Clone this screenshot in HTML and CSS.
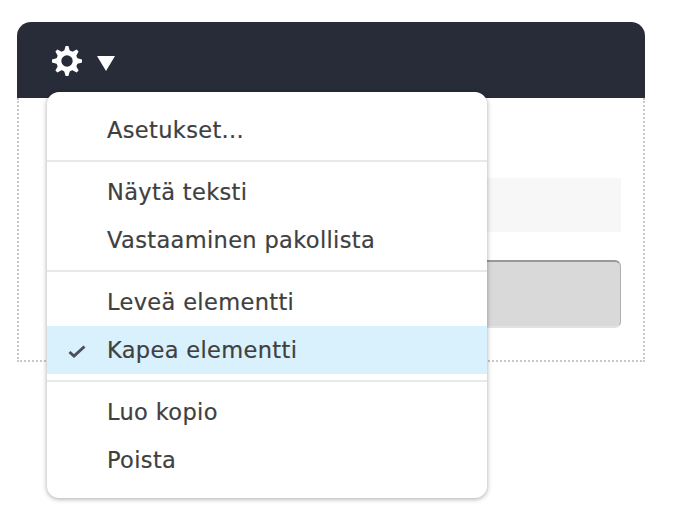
FILE: index.html
```html
<!DOCTYPE html>
<html lang="fi">
<head>
<meta charset="utf-8">
<title>Asetukset</title>
<link rel="stylesheet" href="styles.css">
</head>
<body>
<div class="card">
  <header class="card-head">
    <svg class="gear" viewBox="0 0 32 32" width="32" height="32" aria-hidden="true">
      <circle cx="16" cy="16" r="8.200" fill="none" stroke="#fff" stroke-width="5"/>
      <g fill="#fff">
        <path d="M13 6.500L14.600 1h2.800L19 6.500z"/>
        <path d="M13 6.500L14.600 1h2.800L19 6.500z" transform="rotate(45 16 16)"/>
        <path d="M13 6.500L14.600 1h2.800L19 6.500z" transform="rotate(90 16 16)"/>
        <path d="M13 6.500L14.600 1h2.800L19 6.500z" transform="rotate(135 16 16)"/>
        <path d="M13 6.500L14.600 1h2.800L19 6.500z" transform="rotate(180 16 16)"/>
        <path d="M13 6.500L14.600 1h2.800L19 6.500z" transform="rotate(225 16 16)"/>
        <path d="M13 6.500L14.600 1h2.800L19 6.500z" transform="rotate(270 16 16)"/>
        <path d="M13 6.500L14.600 1h2.800L19 6.500z" transform="rotate(315 16 16)"/>
      </g>
    </svg>
    <span class="caret"></span>
  </header>
  <div class="card-body">
    <div class="field"></div>
    <div class="button"></div>
  </div>
  <nav class="menu">
    <div class="item">Asetukset...</div>
    <div class="divider"></div>
    <div class="item">Näytä teksti</div>
    <div class="item">Vastaaminen pakollista</div>
    <div class="divider"></div>
    <div class="item">Leveä elementti</div>
    <div class="item active">
      <svg class="check" viewBox="0 0 18 14" width="18" height="14" aria-hidden="true"><path fill="none" stroke="#4a4f5a" stroke-width="3" d="M1.500 8l4.500 4L16.500 2.500"/></svg>
      Kapea elementti
    </div>
    <div class="divider"></div>
    <div class="item">Luo kopio</div>
    <div class="item">Poista</div>
  </nav>
</div>
</body>
</html>
```
FILE: styles.css
```css
html, body {
  margin: 0;
  background: #fff;
}
body {
  box-sizing: border-box;
  min-height: 524px;
  padding: 22px 35px 0 17px;
  font-family: "DejaVu Sans", "Noto Sans", sans-serif;
}
.card {
  position: relative;
  width: 628px;
}
.card-head {
  height: 76px;
  box-sizing: border-box;
  padding: 23px 0 0 34px;
  background: #282c38;
  border-radius: 14px 14px 0 0;
  display: flex;
  align-items: flex-start;
  gap: 14px;
}
.gear {
  display: block;
  filter: blur(0.4px);
}
.caret {
  margin-top: 11px;
  width: 0;
  height: 0;
  border-left: 9px solid transparent;
  border-right: 9px solid transparent;
  border-top: 15px solid #fff;
  filter: blur(0.4px);
}
.card-body {
  height: 264px;
  box-sizing: border-box;
  border: 2px dotted #c8c8c8;
  border-top: 0;
  padding: 80px 22px 0 0;
  display: flex;
  flex-direction: column;
  align-items: flex-end;
}
.field {
  width: 500px;
  height: 54px;
  background: #f7f7f7;
}
.button {
  margin-top: 28px;
  width: 500px;
  height: 68px;
  box-sizing: border-box;
  background: #d9d9d9;
  border-radius: 6px;
  border-top: 2px solid #999;
  border-right: 1px solid #b0b0b0;
  border-bottom: 2px solid #e2e2e2;
}
.menu {
  position: absolute;
  left: 30px;
  top: 70px;
  width: 440px;
  box-sizing: border-box;
  padding: 14px 0;
  background: #fff;
  border-radius: 12px;
  box-shadow: 0 1px 5px rgba(0, 0, 0, 0.35);
}
.item {
  position: relative;
  height: 48px;
  line-height: 48px;
  padding-left: 60px;
  font-size: 22.5px;
  letter-spacing: 0.35px;
  color: #404040;
  -webkit-text-stroke: 0.2px #404040;
}
.active {
  background: #d9f1fd;
}
.check {
  position: absolute;
  left: 21px;
  top: 18px;
}
.divider {
  height: 2px;
  margin: 6px 0;
  background: #e8e8e8;
}
```
